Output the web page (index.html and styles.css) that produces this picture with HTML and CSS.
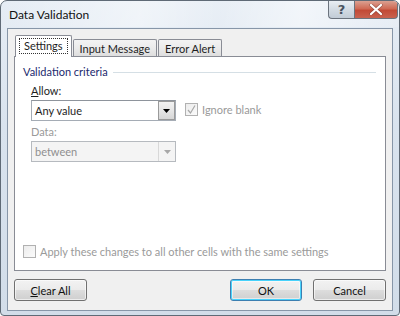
FILE: index.html
```html
<!DOCTYPE html>
<html>
<head>
<meta charset="utf-8">
<link rel="stylesheet" href="styles.css">
</head>
<body>
<div class="window">
  <div class="titlebar">
    <div class="title">Data Validation</div>
    <div class="caption-buttons">
      <div class="cap-btn help">?</div>
      <div class="cap-btn close">
        <svg width="14" height="11" viewBox="0 0 14 11"><path d="M2 1 L12 10 M12 1 L2 10" stroke="#6b3a34" stroke-width="3.6" stroke-linecap="round" opacity="0.5"/><path d="M2 1 L12 10 M12 1 L2 10" stroke="#fff" stroke-width="2.2" stroke-linecap="round"/></svg>
      </div>
    </div>
  </div>
  <div class="client">
    <div class="tabs">
      <div class="tab active"><span class="focus">Settings</span></div>
      <div class="tab">Input Message</div>
      <div class="tab">Error Alert</div>
    </div>
    <div class="panel">
      <div class="group-title"><span>Validation criteria</span><div class="rule"></div></div>
      <div class="row">
        <div class="field">
          <div class="label"><u>A</u>llow:</div>
          <div class="combo">
            <div class="combo-text">Any value</div>
            <div class="combo-btn"><svg width="7" height="4" viewBox="0 0 7 4"><path d="M0 0 H7 L3.5 4 Z" fill="#000"/></svg></div>
          </div>
        </div>
        <div class="check-wrap top">
          <div class="checkbox checked"><svg width="11" height="11" viewBox="0 0 11 11"><path d="M2 6 L4.5 9 L9 1.5" stroke="#a8a8a8" stroke-width="1.2" fill="none"/></svg></div>
          <span class="dim">Ignore blank</span>
        </div>
      </div>
      <div class="field second">
        <div class="label dim">Data:</div>
        <div class="combo disabled">
          <div class="combo-text">between</div>
          <div class="combo-btn"><svg width="7" height="4" viewBox="0 0 7 4"><path d="M0 0 H7 L3.5 4 Z" fill="#a8a8a8"/></svg></div>
        </div>
      </div>
      <div class="spacer"></div>
      <div class="check-wrap bottom">
        <div class="checkbox"></div>
        <span class="dim">Apply these changes to all other cells with the same settings</span>
      </div>
    </div>
    <div class="buttons">
      <div class="btn"><u>C</u>lear All</div>
      <div class="grow"></div>
      <div class="btn default">OK</div>
      <div class="btn">Cancel</div>
    </div>
  </div>
</div>
</body>
</html>
```
FILE: styles.css
```css
html, body {
  margin: 0;
  padding: 0;
  background: #ffffff;
}
body {
  font-family: "Lato", "Liberation Sans", sans-serif;
  font-size: 11px;
  color: #1e1e1e;
}
.window {
  width: 400px;
  height: 316px;
  box-sizing: border-box;
  border: 1px solid #5f6a76;
  border-radius: 7px 7px 4px 4px;
  background: linear-gradient(180deg, #e6edf5 0%, #d9e3ee 40%, #d2dde9 100%);
  display: flex;
  flex-direction: column;
  overflow: hidden;
}
.titlebar {
  height: 26px;
  display: flex;
  align-items: flex-start;
  flex-shrink: 0;
  background: linear-gradient(100deg, rgba(255,255,255,0.0) 0%, rgba(255,255,255,0.45) 35%, rgba(255,255,255,0.1) 55%, rgba(255,255,255,0.5) 75%, rgba(255,255,255,0.1) 100%);
}
.title {
  padding: 6px 0 0 8px;
  font-size: 12px;
  color: #111;
  flex: 1;
}
.caption-buttons {
  display: flex;
  margin-right: 1px;
}
.cap-btn {
  height: 18px;
  box-sizing: border-box;
  display: flex;
  align-items: center;
  justify-content: center;
  border: 1px solid #6b737d;
  border-top: none;
}
.help {
  width: 26px;
  border-radius: 0 0 0 4px;
  border-right: none;
  background: linear-gradient(180deg, #e9eef3 0%, #d3dbe3 50%, #c2ccd6 100%);
  color: #4a5360;
  font-weight: bold;
  font-size: 13px;
  font-family: "DejaVu Sans", sans-serif;
}
.close {
  width: 44px;
  border-radius: 0 0 4px 0;
  background: linear-gradient(180deg, #dba091 0%, #cf6a55 45%, #c24a36 55%, #c9624f 100%);
}
.client {
  flex: 1;
  margin: 1px 6px 6px 6px;
  border: 1px solid #8796a8;
  background: #f0f0f0;
  padding: 6px 6px 9px 6px;
  display: flex;
  flex-direction: column;
}
.tabs {
  display: flex;
  align-items: flex-end;
  height: 21px;
  padding-left: 1px;
  position: relative;
  z-index: 1;
}
.tab {
  height: 17px;
  box-sizing: border-box;
  border: 1px solid #898c95;
  border-bottom: none;
  background: linear-gradient(180deg, #f3f3f3 0%, #ebebeb 50%, #dedede 100%);
  padding: 0 6px;
  display: flex;
  align-items: center;
  margin-right: 1px;
  border-radius: 2px 2px 0 0;
}
.tab.active {
  height: 22px;
  margin-bottom: -1px;
  background: #ffffff;
  padding: 0 3px;
  margin-left: 0;
  margin-right: 1px;
  position: relative;
  z-index: 2;
}
.focus {
  border: 1px dotted #333;
  padding: 0 4px;
  line-height: 14px;
  margin-top: -2px;
}
.panel {
  height: 215px;
  box-sizing: border-box;
  border: 1px solid #898c95;
  background: #ffffff;
  padding: 8px 9px 12px 8px;
  display: flex;
  flex-direction: column;
}
.group-title {
  display: flex;
  align-items: center;
  gap: 5px;
}
.group-title span {
  color: #1c2a6e;
}
.rule {
  flex: 1;
  height: 1px;
  background: #d5dfe5;
  margin-top: 1px;
}
.row {
  display: flex;
  align-items: flex-end;
  margin-top: 5px;
}
.field {
  margin-left: 8px;
  display: flex;
  flex-direction: column;
}
.field.second {
  margin-top: 3px;
}
.label {
  height: 15px;
  line-height: 15px;
  margin-bottom: 2px;
}
.dim {
  color: #9a9a9a;
}
.combo {
  width: 145px;
  height: 21px;
  box-sizing: border-box;
  border: 1px solid #a5acb5;
  border-top-color: #8e949c;
  display: flex;
  background: #fff;
}
.combo-text {
  flex: 1;
  padding-left: 3px;
  line-height: 19px;
}
.combo-btn {
  width: 17px;
  box-sizing: border-box;
  border: 1px solid #9a9a9a;
  background: linear-gradient(180deg, #f2f2f2 0%, #e6e6e6 50%, #d6d6d6 100%);
  display: flex;
  align-items: center;
  justify-content: center;
}
.combo.disabled {
  background: #f4f4f4;
  border-color: #b6babf;
}
.combo.disabled .combo-text {
  color: #8f8f8f;
}
.combo.disabled .combo-btn {
  background: #f4f4f4;
  border: none;
  border-left: 1px solid #d8d8d8;
}
.check-wrap {
  display: flex;
  align-items: center;
  gap: 4px;
}
.check-wrap.top {
  margin-left: 9px;
  margin-bottom: 5px;
}
.checkbox {
  width: 13px;
  height: 13px;
  box-sizing: border-box;
  border: 1px solid #b1b1b1;
  background: linear-gradient(135deg, #ececec 0%, #fbfbfb 100%);
  display: flex;
  align-items: center;
  justify-content: center;
}
.spacer {
  flex: 1;
}
.buttons {
  display: flex;
  margin-top: 8px;
  gap: 11px;
}
.grow {
  flex: 1;
}
.btn {
  width: 73px;
  height: 22px;
  box-sizing: border-box;
  border: 1px solid #707070;
  border-radius: 3px;
  background: linear-gradient(180deg, #f2f2f2 0%, #ebebeb 49%, #dddddd 50%, #cfcfcf 100%);
  display: flex;
  align-items: center;
  justify-content: center;
  color: #111;
  box-shadow: inset 0 0 0 1px rgba(255,255,255,0.6);
}
.btn.default {
  width: 72px;
  border-color: #3c7fb1;
  box-shadow: inset 0 0 0 1px #48d2fb, inset 0 0 0 2px rgba(255,255,255,0.5);
}
```
